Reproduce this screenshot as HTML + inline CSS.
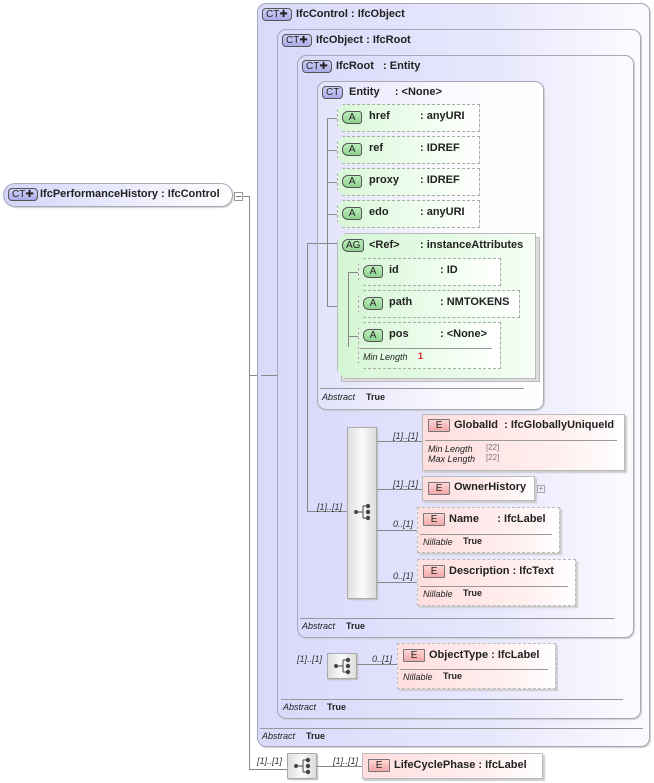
<!DOCTYPE html>
<html><head><meta charset="utf-8">
<style>
*{margin:0;padding:0;box-sizing:border-box}
body{width:654px;height:783px;background:#fff;position:relative;overflow:hidden;font-family:"Liberation Sans",sans-serif;font-size:11px;color:#222}
.a{position:absolute}
.ct{position:absolute;border:1px solid #a8a8b8;border-radius:9px;background:linear-gradient(90deg,#d9d9fb 0%,#e8e8fd 60%,#fbfbff 100%);box-shadow:1px 1px 1px #ccc}
.ent{background:linear-gradient(90deg,#e2e2fb 0%,#fafaff 60%,#fff 100%)}
.b{font-weight:bold;font-size:11px;white-space:nowrap}
.badge{position:absolute;height:13px;border:1px solid #555;border-radius:4px;background:linear-gradient(#cfd0f8,#a9abe8);font-size:10px;line-height:11px;padding:0 3px;color:#222}
.badge.g{background:linear-gradient(#bdeebd,#8fd08f);border-radius:6px 3px 3px 6px}
.badge.e{background:linear-gradient(#ffd6d6,#f2a8a8);border-radius:1px;border-color:#777;padding:0 4px}
.at{position:absolute;border:1px dashed #aaa;background:linear-gradient(90deg,#d8f6d8,#f4fff4 70%,#fff);clip-path:polygon(6px 0,100% 0,100% 100%,6px 100%,0 calc(100% - 6px),0 6px);box-shadow:1px 1px 1px #bbb}
.el{position:absolute;border:1px solid #bbb;background:linear-gradient(90deg,#ffdede,#fff0f0 70%,#fff);box-shadow:2px 2px 1px #ccc}
.el.d{border-style:dashed}
.hl{position:absolute;height:1px;background:#888}
.vl{position:absolute;width:1px;background:#888}
.sep{position:absolute;height:1px;background:#999}
.it{font-style:italic;font-size:9px;position:absolute;white-space:nowrap}
.tb{font-weight:bold;font-size:9px;position:absolute}
.seq{position:absolute;border:1px solid #aaa;background:linear-gradient(90deg,#e0e0e0,#fafafa 50%,#ddd);box-shadow:1px 1px 1px #bbb}
.mul{position:absolute;font-style:italic;font-size:9px;color:#333}
</style></head><body>

<div class="hl" style="left:243px;top:196px;width:7px"></div>
<div class="vl" style="left:249px;top:196px;height:574px"></div>
<div class="hl" style="left:249px;top:375px;width:12px"></div>
<div class="hl" style="left:249px;top:769px;width:38px"></div>

<div class="ct" style="left:257px;top:3px;width:393px;height:744px"></div>
<div class="badge" style="left:262px;top:8px">CT✚</div>
<div class="a b" style="left:296px;top:8px">IfcControl : IfcObject</div>
<div class="sep" style="left:260px;top:728px;width:383px"></div>
<div class="it" style="left:262px;top:731px">Abstract</div><div class="tb" style="left:306px;top:731px">True</div>

<div class="hl" style="left:261px;top:375px;width:27px"></div>
<div class="vl" style="left:288px;top:346px;height:319px"></div>
<div class="hl" style="left:288px;top:346px;width:10px"></div>
<div class="hl" style="left:288px;top:664px;width:39px"></div>

<div class="ct" style="left:277px;top:29px;width:364px;height:690px"></div>
<div class="badge" style="left:282px;top:34px">CT✚</div>
<div class="a b" style="left:316px;top:34px">IfcObject : IfcRoot</div>
<div class="sep" style="left:281px;top:699px;width:342px"></div>
<div class="it" style="left:283px;top:702px">Abstract</div><div class="tb" style="left:327px;top:702px">True</div>

<div class="ct" style="left:297px;top:55px;width:337px;height:583px"></div>
<div class="badge" style="left:302px;top:60px">CT✚</div>
<div class="a b" style="left:336px;top:60px">IfcRoot &nbsp; : Entity</div>
<div class="sep" style="left:300px;top:618px;width:314px"></div>
<div class="it" style="left:302px;top:621px">Abstract</div><div class="tb" style="left:346px;top:621px">True</div>

<div class="vl" style="left:307px;top:243px;height:269px"></div>
<div class="hl" style="left:307px;top:243px;width:11px"></div>
<div class="hl" style="left:307px;top:511px;width:40px"></div>
<div class="mul" style="left:317px;top:502px">[1]..[1]</div>

<div class="ct ent" style="left:317px;top:81px;width:227px;height:329px"></div>
<div class="badge" style="left:322px;top:86px">CT</div>
<div class="a b" style="left:349px;top:86px">Entity &nbsp; &nbsp; : &lt;None&gt;</div>
<div class="sep" style="left:320px;top:388px;width:204px"></div>
<div class="it" style="left:322px;top:392px">Abstract</div><div class="tb" style="left:366px;top:392px">True</div>

<div class="vl" style="left:327px;top:118px;height:189px"></div>
<div class="hl" style="left:318px;top:243px;width:20px"></div>
<div class="hl" style="left:327px;top:118px;width:11px"></div>
<div class="hl" style="left:327px;top:150px;width:11px"></div>
<div class="hl" style="left:327px;top:182px;width:11px"></div>
<div class="hl" style="left:327px;top:214px;width:11px"></div>
<div class="hl" style="left:327px;top:306px;width:21px"></div>

<div class="at" style="left:337px;top:104px;width:143px;height:28px"></div>
<div class="badge g" style="left:342px;top:111px">&nbsp;A&nbsp;</div><div class="a b" style="left:369px;top:110px">href</div><div class="a b" style="left:420px;top:110px">: anyURI</div>
<div class="at" style="left:337px;top:136px;width:143px;height:28px"></div>
<div class="badge g" style="left:342px;top:143px">&nbsp;A&nbsp;</div><div class="a b" style="left:369px;top:142px">ref</div><div class="a b" style="left:420px;top:142px">: IDREF</div>
<div class="at" style="left:337px;top:168px;width:143px;height:28px"></div>
<div class="badge g" style="left:342px;top:175px">&nbsp;A&nbsp;</div><div class="a b" style="left:369px;top:174px">proxy</div><div class="a b" style="left:420px;top:174px">: IDREF</div>
<div class="at" style="left:337px;top:200px;width:143px;height:28px"></div>
<div class="badge g" style="left:342px;top:207px">&nbsp;A&nbsp;</div><div class="a b" style="left:369px;top:206px">edo</div><div class="a b" style="left:420px;top:206px">: anyURI</div>

<div class="a" style="left:341px;top:237px;width:199px;height:145px;background:#ddd;border:1px solid #bbb"></div>
<div class="a" style="left:337px;top:233px;width:199px;height:146px;border:1px solid #bbb;background:linear-gradient(90deg,#d4f6d4,#eafcea 70%,#f6fff6);clip-path:polygon(8px 0,100% 0,100% 100%,8px 100%,0 calc(100% - 8px),0 8px)"></div>
<div class="badge g" style="left:342px;top:239px">AG</div>
<div class="a b" style="left:369px;top:239px">&lt;Ref&gt;</div><div class="a b" style="left:420px;top:239px">: instanceAttributes</div>
<div class="vl" style="left:348px;top:272px;height:75px"></div>
<div class="hl" style="left:348px;top:272px;width:10px"></div>
<div class="hl" style="left:348px;top:336px;width:10px"></div>

<div class="at" style="left:358px;top:258px;width:143px;height:28px"></div>
<div class="badge g" style="left:363px;top:265px">&nbsp;A&nbsp;</div><div class="a b" style="left:389px;top:264px">id</div><div class="a b" style="left:440px;top:264px">: ID</div>
<div class="at" style="left:358px;top:290px;width:162px;height:28px"></div>
<div class="badge g" style="left:363px;top:297px">&nbsp;A&nbsp;</div><div class="a b" style="left:389px;top:296px">path</div><div class="a b" style="left:440px;top:296px">: NMTOKENS</div>
<div class="at" style="left:358px;top:322px;width:143px;height:47px"></div>
<div class="badge g" style="left:363px;top:329px">&nbsp;A&nbsp;</div><div class="a b" style="left:389px;top:328px">pos</div><div class="a b" style="left:440px;top:328px">: &lt;None&gt;</div>
<div class="sep" style="left:360px;top:348px;width:132px"></div>
<div class="it" style="left:363px;top:352px">Min Length</div><div class="tb" style="left:418px;top:351px;color:#e02020">1</div>

<div class="seq" style="left:347px;top:427px;width:30px;height:172px"></div>
<svg class="a" style="left:353px;top:503px" width="20" height="18"><circle cx="3" cy="9" r="2" fill="#444"/><line x1="3" y1="9" x2="10" y2="9" stroke="#444"/><line x1="10" y1="3" x2="10" y2="15" stroke="#444"/><line x1="10" y1="3" x2="15" y2="3" stroke="#444"/><line x1="10" y1="15" x2="15" y2="15" stroke="#444"/><circle cx="15" cy="3" r="2.2" fill="#444"/><circle cx="15" cy="9" r="2.2" fill="#444"/><circle cx="15" cy="15" r="2.2" fill="#444"/></svg>
<div class="hl" style="left:377px;top:441px;width:45px"></div>
<div class="hl" style="left:377px;top:489px;width:45px"></div>
<div class="hl" style="left:377px;top:530px;width:40px"></div>
<div class="hl" style="left:377px;top:582px;width:40px"></div>
<div class="mul" style="left:393px;top:431px">[1]..[1]</div>
<div class="mul" style="left:393px;top:479px">[1]..[1]</div>
<div class="mul" style="left:393px;top:519px">0..[1]</div>
<div class="mul" style="left:393px;top:571px">0..[1]</div>

<div class="el" style="left:422px;top:414px;width:203px;height:57px"></div>
<div class="badge e" style="left:428px;top:419px">&nbsp;E&nbsp;</div><div class="a b" style="left:454px;top:419px">GlobalId &nbsp;: IfcGloballyUniqueId</div>
<div class="sep" style="left:425px;top:440px;width:192px"></div>
<div class="it" style="left:428px;top:444px">Min Length</div><div class="a" style="left:486px;top:443px;font-size:8px;color:#777">[22]</div>
<div class="it" style="left:428px;top:454px">Max Length</div><div class="a" style="left:486px;top:453px;font-size:8px;color:#777">[22]</div>

<div class="el" style="left:422px;top:476px;width:113px;height:25px"></div>
<div class="badge e" style="left:428px;top:482px">&nbsp;E&nbsp;</div><div class="a b" style="left:454px;top:481px">OwnerHistory</div>
<div class="a" style="left:537px;top:485px;width:8px;height:8px;border:1px solid #aaa;font-size:8px;line-height:6px;text-align:center;color:#888">+</div>

<div class="el d" style="left:417px;top:507px;width:143px;height:46px"></div>
<div class="badge e" style="left:423px;top:513px">&nbsp;E&nbsp;</div><div class="a b" style="left:449px;top:513px">Name &nbsp; &nbsp; &nbsp;: IfcLabel</div>
<div class="sep" style="left:420px;top:534px;width:132px"></div>
<div class="it" style="left:423px;top:537px">Nillable</div><div class="tb" style="left:463px;top:536px">True</div>

<div class="el d" style="left:417px;top:559px;width:159px;height:47px"></div>
<div class="badge e" style="left:423px;top:565px">&nbsp;E&nbsp;</div><div class="a b" style="left:449px;top:565px">Description : IfcText</div>
<div class="sep" style="left:420px;top:586px;width:148px"></div>
<div class="it" style="left:423px;top:589px">Nillable</div><div class="tb" style="left:463px;top:588px">True</div>

<div class="mul" style="left:297px;top:654px">[1]..[1]</div>
<div class="seq" style="left:327px;top:653px;width:30px;height:26px"></div>
<svg class="a" style="left:333px;top:657px" width="20" height="18"><circle cx="3" cy="9" r="2" fill="#444"/><line x1="3" y1="9" x2="10" y2="9" stroke="#444"/><line x1="10" y1="3" x2="10" y2="15" stroke="#444"/><line x1="10" y1="3" x2="15" y2="3" stroke="#444"/><line x1="10" y1="15" x2="15" y2="15" stroke="#444"/><circle cx="15" cy="3" r="2.2" fill="#444"/><circle cx="15" cy="9" r="2.2" fill="#444"/><circle cx="15" cy="15" r="2.2" fill="#444"/></svg>
<div class="hl" style="left:357px;top:664px;width:40px"></div>
<div class="mul" style="left:372px;top:654px">0..[1]</div>
<div class="el d" style="left:397px;top:643px;width:159px;height:46px"></div>
<div class="badge e" style="left:403px;top:649px">&nbsp;E&nbsp;</div><div class="a b" style="left:429px;top:649px">ObjectType : IfcLabel</div>
<div class="sep" style="left:400px;top:669px;width:148px"></div>
<div class="it" style="left:403px;top:672px">Nillable</div><div class="tb" style="left:443px;top:671px">True</div>

<div class="mul" style="left:257px;top:756px">[1]..[1]</div>
<div class="seq" style="left:287px;top:753px;width:30px;height:26px"></div>
<svg class="a" style="left:293px;top:757px" width="20" height="18"><circle cx="3" cy="9" r="2" fill="#444"/><line x1="3" y1="9" x2="10" y2="9" stroke="#444"/><line x1="10" y1="3" x2="10" y2="15" stroke="#444"/><line x1="10" y1="3" x2="15" y2="3" stroke="#444"/><line x1="10" y1="15" x2="15" y2="15" stroke="#444"/><circle cx="15" cy="3" r="2.2" fill="#444"/><circle cx="15" cy="9" r="2.2" fill="#444"/><circle cx="15" cy="15" r="2.2" fill="#444"/></svg>
<div class="hl" style="left:317px;top:766px;width:45px"></div>
<div class="mul" style="left:333px;top:756px">[1]..[1]</div>
<div class="el" style="left:362px;top:753px;width:181px;height:26px"></div>
<div class="badge e" style="left:368px;top:759px">&nbsp;E&nbsp;</div><div class="a b" style="left:394px;top:759px">LifeCyclePhase : IfcLabel</div>

<div class="ct" style="left:3px;top:183px;width:230px;height:24px;border-radius:12px;background:linear-gradient(90deg,#d4d4fa,#eeeefe 60%,#fff)"></div>
<div class="badge" style="left:8px;top:188px">CT✚</div>
<div class="a b" style="left:40px;top:188px">IfcPerformanceHistory : IfcControl</div>
<div class="a" style="left:234px;top:192px;width:9px;height:9px;border:1px solid #999;background:#fff"><div class="a" style="left:1px;top:3px;width:5px;height:1px;background:#777"></div></div>

</body></html>
